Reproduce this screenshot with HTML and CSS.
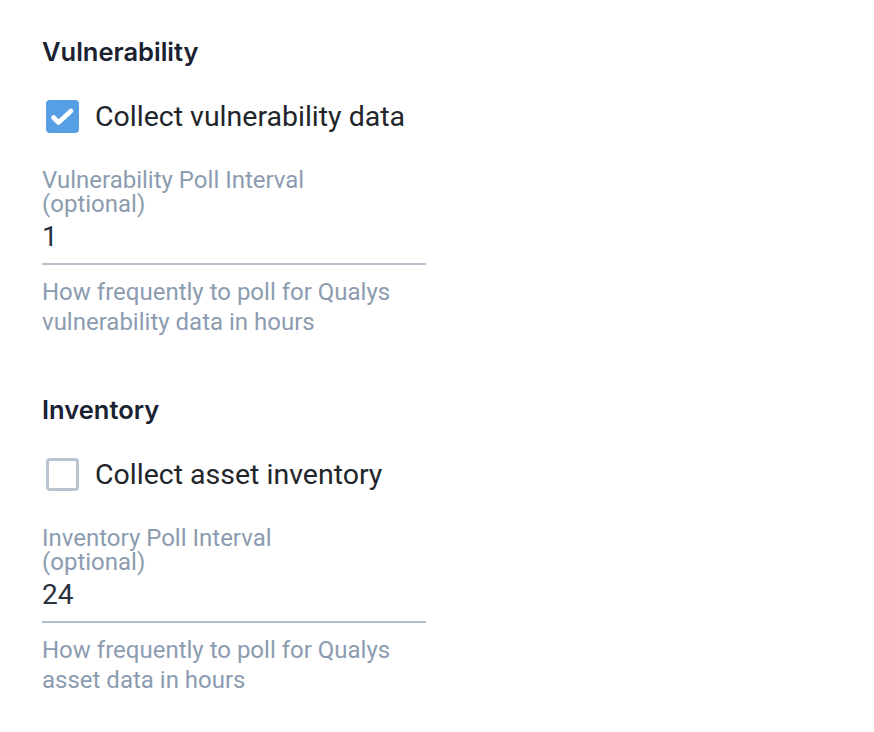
FILE: index.html
```html
<!DOCTYPE html>
<html>
<head>
<meta charset="utf-8">
<link rel="stylesheet" href="styles.css">
</head>
<body>
<div class="page">
  <section class="section">
    <h2 class="section-title">Vulnerability</h2>
    <label class="check-row">
      <span class="box box-checked">
        <svg viewBox="0 0 33 33" width="33" height="33"><path d="M7.5 17.5 L12.5 22.5 L25 11" fill="none" stroke="#fff" stroke-width="4.6" stroke-linecap="round" stroke-linejoin="round"/></svg>
      </span>
      <span class="check-text">Collect vulnerability data</span>
    </label>
    <div class="field">
      <div class="field-label">Vulnerability Poll Interval<br>(optional)</div>
      <div class="field-input">1</div>
      <div class="field-help">How frequently to poll for Qualys<br>vulnerability data in hours</div>
    </div>
  </section>
  <section class="section">
    <h2 class="section-title">Inventory</h2>
    <label class="check-row">
      <span class="box box-empty"></span>
      <span class="check-text">Collect asset inventory</span>
    </label>
    <div class="field">
      <div class="field-label">Inventory Poll Interval<br>(optional)</div>
      <div class="field-input">24</div>
      <div class="field-help">How frequently to poll for Qualys<br>asset data in hours</div>
    </div>
  </section>
</div>
</body>
</html>
```
FILE: styles.css
```css
html, body {
  margin: 0;
  padding: 0;
  background: #ffffff;
}
.page {
  display: flex;
  flex-direction: column;
  gap: 56px;
  padding: 35px 42px 0 42px;
  font-family: Roboto, "Liberation Sans", sans-serif;
}
.section {
  display: flex;
  flex-direction: column;
}
.section-title {
  margin: 0;
  font-family: Inter, "Liberation Sans", sans-serif;
  font-weight: 600;
  font-size: 25.5px;
  line-height: 34px;
  color: #1a2232;
}
.check-row {
  display: flex;
  align-items: center;
  gap: 16px;
  margin-top: 29px;
  margin-left: 4px;
}
.box {
  width: 33px;
  height: 33px;
  box-sizing: border-box;
  border-radius: 4px;
  flex: none;
  display: block;
}
.box svg { display: block; }
.box-checked {
  background: #579fe4;
}
.box-empty {
  border: 3px solid #b9c4d2;
  background: #fff;
}
.check-text {
  font-size: 28.5px;
  line-height: 34px;
  padding-top: 2px;
  color: #222529;
}
.field {
  width: 384px;
  margin-top: 34px;
}
.field-label {
  font-size: 24px;
  line-height: 24px;
  color: #8c9cb0;
}
.field-input {
  font-size: 28px;
  line-height: 34px;
  color: #2a3240;
  padding: 4px 0 9px;
  border-bottom: 2px solid #b4c0cd;
}
.field-help {
  margin-top: 12px;
  font-size: 24px;
  line-height: 30px;
  color: #8c9cb0;
}
```
